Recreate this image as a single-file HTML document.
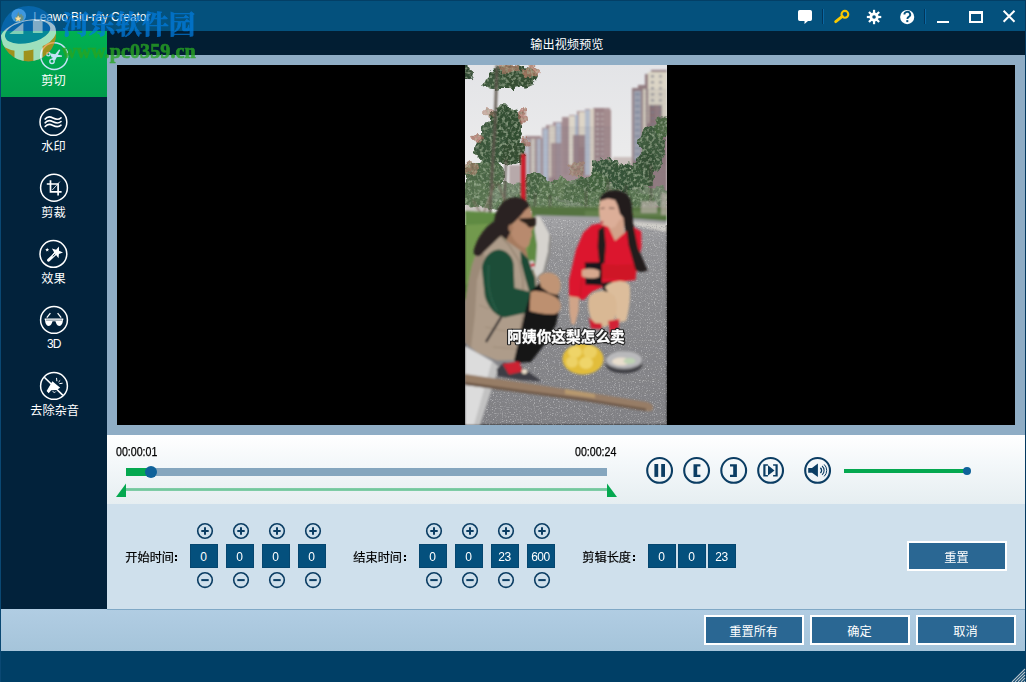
<!DOCTYPE html>
<html lang="zh-CN"><head><meta charset="utf-8"><title>Leawo Blu-ray Creator</title>
<style>
html,body{margin:0;padding:0}
body{width:1026px;height:682px;position:relative;overflow:hidden;background:#02213a;font-family:"Liberation Sans",sans-serif;font-size:12px;color:#fff}
.a{position:absolute}
.g{position:absolute;overflow:visible}
.h{position:absolute;color:transparent;white-space:nowrap;line-height:1.4;height:1.4em;overflow:hidden;font-family:"Liberation Sans",sans-serif}
.box{position:absolute;width:28px;height:24px;background:#04507d;color:#fff;font-size:12px;line-height:24px;text-align:center;top:544px;box-sizing:border-box;border:1px solid #05466f;text-indent:-1.2px;letter-spacing:-.5px}
.btn{position:absolute;width:100px;height:30px;box-sizing:border-box;border:2px solid #fff;background:#2a6793}
.t{position:absolute;white-space:nowrap}
.lbl{font-family:"Liberation Sans","Noto Sans CJK SC",sans-serif;font-size:12.2px}
</style></head><body>
<div class="a" style="left:0;top:0;width:1026px;height:31px;background:#04517d"></div><div class="a" style="left:0;top:0;width:1026px;height:1px;background:#033f66"></div><div class="a" style="left:0;top:31px;width:107px;height:578px;background:#02223b"></div><div class="a" style="left:0;top:31px;width:107px;height:66px;background:linear-gradient(#00b152,#009c4a)"></div><div class="a" style="left:107px;top:31px;width:919px;height:24px;background:#021e33"></div><div class="a" style="left:107px;top:55px;width:918px;height:380px;background:#8fadc5"></div><div class="a" style="left:117px;top:65px;width:898px;height:360px;background:#000"></div><div class="a" style="left:107px;top:435px;width:918px;height:69px;background:linear-gradient(#ffffff,#f4f8fa 40%,#e6eef1)"></div><div class="a" style="left:107px;top:504px;width:918px;height:105px;background:#cfe0ec"></div><div class="a" style="left:0;top:609px;width:1026px;height:42px;background:linear-gradient(#b1cde3,#a5c4da)"></div><div class="a" style="left:107px;top:609px;width:918px;height:1px;background:#7fa8c6"></div><div class="a" style="left:0;top:651px;width:1026px;height:31px;background:#003f66"></div><div class="a" style="left:0;top:0;width:1px;height:682px;background:#0a4873"></div><div class="a" style="left:1025px;top:0;width:1px;height:682px;background:#053a60"></div><div class="a" style="left:0;top:0;width:1px;height:31px;background:#033f66"></div><div class="t" id="ttl" style="left:33.3px;top:10px;font-size:12px;line-height:14px;color:#fff;letter-spacing:-.16px">Leawo Blu-ray Creator</div><svg class="g" style="left:529.7px;top:36.20px" width="74.0" height="17.8" viewBox="0 -12.70 74.0 17.8"><text class="lbl" x="0.3" y="0" fill="#fff">输出视频预览</text></svg><svg class="g" style="left:790px;top:0" width="236" height="31" viewBox="790 0 236 31">
<path d="M799.8 9.9h10.4a1.8 1.8 0 0 1 1.8 1.8v7.6a1.8 1.8 0 0 1-1.8 1.8h-2.2l-3.5 3v-3h-4.7a1.8 1.8 0 0 1-1.8-1.8v-7.6a1.8 1.8 0 0 1 1.8-1.8z" fill="#fff"/>
<rect x="822" y="9" width="1" height="15" fill="#03365a"/><rect x="823" y="9" width="1" height="15" fill="#0a68a4"/>
<circle cx="844.9" cy="14.3" r="3.4" fill="none" stroke="#f8c800" stroke-width="2.1"/>
<path d="M842.3 16.4 L835.7 21.7" stroke="#f8c800" stroke-width="2.9" stroke-linecap="round" fill="none"/>

<g transform="translate(874.05 17)" fill="#fff">
<circle r="4.6"/>
<rect x="-1.1" y="-7.2" width="2.2" height="14.4"/><rect x="-7.2" y="-1.1" width="14.4" height="2.2"/>
<g transform="rotate(45)"><rect x="-1.1" y="-7.2" width="2.2" height="14.4"/><rect x="-7.2" y="-1.1" width="14.4" height="2.2"/></g>
<circle r="1.8" fill="#04517d"/>
</g>
<circle cx="907.2" cy="17.1" r="7.05" fill="#fff"/>
<path d="M904.4 14.6 a2.9 2.7 0 1 1 4.3 2.3 c-1.1 .7 -1.3 1.1 -1.3 2.2" fill="none" stroke="#04517d" stroke-width="1.9"/>
<rect x="906.3" y="20.1" width="2" height="2" fill="#04517d"/>
<rect x="924" y="9" width="1" height="15" fill="#03365a"/><rect x="925" y="9" width="1" height="15" fill="#0a68a4"/>
<rect x="937" y="21" width="12" height="2" fill="#fff"/>
<path d="M969 11h14v12h-14z M971 14v7h10v-7z" fill="#fff" fill-rule="evenodd"/>
<path d="M1003.6 10.8 L1014.5 21.7 M1014.5 10.8 L1003.6 21.7" stroke="#fff" stroke-width="2" fill="none"/>
</svg><svg class="g" style="left:0;top:31px" width="107" height="400" viewBox="0 31 107 400"><circle cx="54.2" cy="56.1" r="13.4" fill="none" stroke="#c4e2f7" stroke-width="1.5"/><g fill="none" stroke="#c4e2f7" stroke-width="1.4">
<circle cx="48.4" cy="54.2" r="1.7"/><circle cx="52" cy="61.3" r="2.2"/></g>
<path d="M50 53.2 L62 55.5 L62 56.7 L51.6 57.6 Z" fill="#c4e2f7"/>
<path d="M51.8 58.6 L59.1 49.4 L60.3 50 L55.1 60.6 Z" fill="#c4e2f7"/><circle cx="53.4" cy="121.95" r="13.4" fill="none" stroke="#fff" stroke-width="1.5"/><path d="M45.2 119.1 C47.6 115.8 50 116.4 53 118.0 S58.4 120.2 61 117.8" fill="none" stroke="#fff" stroke-width="1.65" stroke-linecap="round"/><path d="M45.2 122.8 C47.6 119.5 50 120.1 53 121.7 S58.4 123.9 61 121.5" fill="none" stroke="#fff" stroke-width="1.65" stroke-linecap="round"/><path d="M45.2 126.5 C47.6 123.2 50 123.8 53 125.4 S58.4 127.6 61 125.2" fill="none" stroke="#fff" stroke-width="1.65" stroke-linecap="round"/><circle cx="54" cy="187.75" r="13.4" fill="none" stroke="#fff" stroke-width="1.5"/><g fill="none" stroke="#fff" stroke-width="1.7">
<path d="M50.5 180.3V191.8H61.6"/><path d="M46.8 184H58.1V195.5"/></g>
<path d="M52.2 190.1L59.9 181.6" stroke="#fff" stroke-width=".8"/><circle cx="53.4" cy="253.9" r="13.4" fill="none" stroke="#fff" stroke-width="1.5"/><path d="M58.92 246.47L59.04 250.79L63.00 252.52L58.93 253.96L58.51 258.26L55.88 254.84L51.66 255.77L54.10 252.21L51.91 248.48L56.06 249.70Z" fill="#fff"/><path d="M47.20 247.70L47.73 249.07L49.20 249.15L48.06 250.08L48.43 251.50L47.20 250.70L45.97 251.50L46.34 250.08L45.20 249.15L46.67 249.07Z" fill="#fff"/><path d="M55.2 254 L48.6 260.2" stroke="#fff" stroke-width="3" stroke-linecap="round"/><path d="M54.9 254.3 L53 256.1" stroke="#02223b" stroke-width=".9" stroke-linecap="round"/><circle cx="54" cy="319.95" r="13.4" fill="none" stroke="#fff" stroke-width="1.5"/><path d="M44.7 318.6H63.3V320H62.9C62.9 323 61.6 325.9 59.3 325.9C57 325.9 56.3 323.5 55.4 321.2H52.6C51.7 323.5 51 325.9 48.7 325.9C46.4 325.9 45.1 323 45.1 320H44.7Z" fill="#fff"/>
<path d="M46 320.15H62" stroke="#02223b" stroke-width=".55"/>
<path d="M46.8 317.6L50.4 313.2M61.2 317.6L57.6 313.2" stroke="#fff" stroke-width="1.3" fill="none"/><circle cx="54" cy="385.95" r="13.4" fill="none" stroke="#fff" stroke-width="1.5"/><path d="M44.3 377.3L63 395.4" stroke="#fff" stroke-width="1.6"/>
<path d="M46.6 391 L52.4 381.2 L60.2 387.7 L56.4 389.9 L51.2 390.2 L48.7 393.2 Z" fill="#fff"/>
<path d="M56.5 377.9L56.9 381.2M60.2 380.4L58.5 382M62.6 383.2L59.3 383.7" stroke="#fff" stroke-width="1" fill="none"/>
<path d="M52.8 391.2a1.6 1.6 0 0 0 3 .3" stroke="#fff" stroke-width=".9" fill="none"/></svg><svg class="g" style="left:41.300000000000004px;top:72.20px" width="26.0" height="17.8" viewBox="0 -12.70 26.0 17.8"><text class="lbl" x="0.3" y="0" fill="#fff">剪切</text></svg><svg class="g" style="left:41.300000000000004px;top:138.20px" width="26.0" height="17.8" viewBox="0 -12.70 26.0 17.8"><text class="lbl" x="0.3" y="0" fill="#fff">水印</text></svg><svg class="g" style="left:41.300000000000004px;top:204.20px" width="26.0" height="17.8" viewBox="0 -12.70 26.0 17.8"><text class="lbl" x="0.3" y="0" fill="#fff">剪裁</text></svg><svg class="g" style="left:41.300000000000004px;top:270.20px" width="26.0" height="17.8" viewBox="0 -12.70 26.0 17.8"><text class="lbl" x="0.3" y="0" fill="#fff">效果</text></svg><svg class="g" style="left:29.5px;top:402.20px" width="50.0" height="17.8" viewBox="0 -12.70 50.0 17.8"><text class="lbl" x="0.3" y="0" fill="#fff">去除杂音</text></svg><div class="t" style="left:47px;top:336.5px;font-size:12px;line-height:14px;color:#fff;letter-spacing:-.9px">3D</div><svg class="g" style="left:465px;top:65px;overflow:hidden" width="202" height="360" viewBox="0 0 202 360"><defs>
<linearGradient id="sky" x1="0" y1="0" x2="0" y2="1"><stop offset="0" stop-color="#e3e4e7"/><stop offset="1" stop-color="#f1f0ef"/></linearGradient>
<linearGradient id="road" x1="0" y1="0" x2="0" y2="1"><stop offset="0" stop-color="#a5a5a8"/><stop offset=".16" stop-color="#939396"/><stop offset=".45" stop-color="#8a8a8d"/><stop offset="1" stop-color="#808084"/></linearGradient>
<filter id="bl" x="-5%" y="-5%" width="110%" height="110%"><feGaussianBlur stdDeviation="0.8"/></filter>
<filter id="bl2" x="-5%" y="-5%" width="110%" height="110%"><feGaussianBlur stdDeviation="1.6"/></filter>
<filter id="nz" x="0" y="0" width="100%" height="100%"><feTurbulence type="fractalNoise" baseFrequency="0.9" numOctaves="2" seed="3"/><feColorMatrix values="0 0 0 0 0.5  0 0 0 0 0.5  0 0 0 0 0.5  1.6 0 0 0 -0.55"/></filter>
<filter id="nz2" x="0" y="0" width="100%" height="100%"><feTurbulence type="fractalNoise" baseFrequency="0.25" numOctaves="3" seed="8"/><feColorMatrix values="0 0 0 0 0.12  0 0 0 0 0.2  0 0 0 0 0.1  2.2 0 0 0 -0.9"/></filter>
<filter id="lf" x="-10%" y="-10%" width="120%" height="120%"><feTurbulence type="fractalNoise" baseFrequency="0.11" numOctaves="3" seed="5" result="t"/><feDisplacementMap in="SourceGraphic" in2="t" scale="11" xChannelSelector="R" yChannelSelector="G" result="d"/><feTurbulence type="fractalNoise" baseFrequency="0.32" numOctaves="2" seed="9" result="n"/><feColorMatrix in="n" type="matrix" values="0 0 0 0 .05  0 0 0 0 .1  0 0 0 0 .05  0 1.3 0 0 -0.52" result="sh"/><feComposite in="sh" in2="d" operator="in" result="shc"/><feColorMatrix in="n" type="matrix" values="0 0 0 0 .52  0 0 0 0 .66  0 0 0 0 .45  1.3 0 0 0 -0.62" result="hl"/><feComposite in="hl" in2="d" operator="in" result="hlc"/><feMerge><feMergeNode in="d"/><feMergeNode in="shc"/><feMergeNode in="hlc"/></feMerge><feGaussianBlur stdDeviation="0.6"/></filter>
<filter id="nzw" x="0" y="0" width="100%" height="100%"><feTurbulence type="fractalNoise" baseFrequency="0.85" numOctaves="2" seed="11"/><feColorMatrix values="0 0 0 0 0.86  0 0 0 0 0.86  0 0 0 0 0.86  3.2 0 0 0 -1.75"/><feComposite operator="in" in2="SourceGraphic"/></filter>
<filter id="nzd" x="0" y="0" width="100%" height="100%"><feTurbulence type="fractalNoise" baseFrequency="0.8" numOctaves="2" seed="23"/><feColorMatrix values="0 0 0 0 0.22  0 0 0 0 0.22  0 0 0 0 0.24  3.2 0 0 0 -1.75"/><feComposite operator="in" in2="SourceGraphic"/></filter>
<filter id="nzl" x="0" y="0" width="100%" height="100%"><feTurbulence type="fractalNoise" baseFrequency="0.35" numOctaves="3" seed="4"/><feColorMatrix values="0 0 0 0 0.93  0 0 0 0 0.93  0 0 0 0 0.92  2.6 0 0 0 -1.35"/></filter>
<pattern id="win" width="3.2" height="3.4" patternUnits="userSpaceOnUse"><rect x=".6" y=".8" width="1.6" height="1.5" fill="#5d6070" opacity=".38"/></pattern><clipPath id="pc"><rect width="202" height="360"/></clipPath>
</defs><g clip-path="url(#pc)"><rect width="202" height="160" fill="url(#sky)"/><g filter="url(#bl)"><path d="M167 23H173V20H180V9H186V5H202V150H167Z" fill="#937d81"/><path d="M183 7H202V52H197V40H190V58H183Z" fill="#dcd5c6"/><path d="M169 26H176V95H169Z" fill="#a9b3c2" opacity=".8"/><path d="M178 24H181V95H178Z" fill="#d5cdbf"/><path d="M184 40H190V96H184Z" fill="#8c7276"/><path d="M192 52H202V100H192Z" fill="#8f777b"/><rect x="186" y="10" width="3" height="2.5" fill="#7d7f8c" opacity=".7"/><rect x="194" y="10" width="3" height="2.5" fill="#7d7f8c" opacity=".6"/><rect x="170" y="28" width="5" height="2.5" fill="#78849a" opacity=".6"/><rect x="186" y="16" width="3" height="2.5" fill="#7d7f8c" opacity=".7"/><rect x="194" y="16" width="3" height="2.5" fill="#7d7f8c" opacity=".6"/><rect x="170" y="34" width="5" height="2.5" fill="#78849a" opacity=".6"/><rect x="186" y="22" width="3" height="2.5" fill="#7d7f8c" opacity=".7"/><rect x="194" y="22" width="3" height="2.5" fill="#7d7f8c" opacity=".6"/><rect x="170" y="40" width="5" height="2.5" fill="#78849a" opacity=".6"/><rect x="186" y="28" width="3" height="2.5" fill="#7d7f8c" opacity=".7"/><rect x="194" y="28" width="3" height="2.5" fill="#7d7f8c" opacity=".6"/><rect x="170" y="46" width="5" height="2.5" fill="#78849a" opacity=".6"/><rect x="186" y="34" width="3" height="2.5" fill="#7d7f8c" opacity=".7"/><rect x="194" y="34" width="3" height="2.5" fill="#7d7f8c" opacity=".6"/><rect x="170" y="52" width="5" height="2.5" fill="#78849a" opacity=".6"/><rect x="186" y="40" width="3" height="2.5" fill="#7d7f8c" opacity=".7"/><rect x="194" y="40" width="3" height="2.5" fill="#7d7f8c" opacity=".6"/><rect x="170" y="58" width="5" height="2.5" fill="#78849a" opacity=".6"/><rect x="186" y="46" width="3" height="2.5" fill="#7d7f8c" opacity=".7"/><rect x="194" y="46" width="3" height="2.5" fill="#7d7f8c" opacity=".6"/><rect x="170" y="64" width="5" height="2.5" fill="#78849a" opacity=".6"/><rect x="186" y="52" width="3" height="2.5" fill="#7d7f8c" opacity=".7"/><rect x="194" y="52" width="3" height="2.5" fill="#7d7f8c" opacity=".6"/><rect x="170" y="70" width="5" height="2.5" fill="#78849a" opacity=".6"/><rect x="186" y="58" width="3" height="2.5" fill="#7d7f8c" opacity=".7"/><rect x="194" y="58" width="3" height="2.5" fill="#7d7f8c" opacity=".6"/><rect x="170" y="76" width="5" height="2.5" fill="#78849a" opacity=".6"/><rect x="186" y="64" width="3" height="2.5" fill="#7d7f8c" opacity=".7"/><rect x="194" y="64" width="3" height="2.5" fill="#7d7f8c" opacity=".6"/><rect x="170" y="82" width="5" height="2.5" fill="#78849a" opacity=".6"/><rect x="186" y="70" width="3" height="2.5" fill="#7d7f8c" opacity=".7"/><rect x="194" y="70" width="3" height="2.5" fill="#7d7f8c" opacity=".6"/><rect x="170" y="88" width="5" height="2.5" fill="#78849a" opacity=".6"/><rect x="186" y="76" width="3" height="2.5" fill="#7d7f8c" opacity=".7"/><rect x="194" y="76" width="3" height="2.5" fill="#7d7f8c" opacity=".6"/><rect x="170" y="94" width="5" height="2.5" fill="#78849a" opacity=".6"/><rect x="186" y="82" width="3" height="2.5" fill="#7d7f8c" opacity=".7"/><rect x="194" y="82" width="3" height="2.5" fill="#7d7f8c" opacity=".6"/><rect x="170" y="100" width="5" height="2.5" fill="#78849a" opacity=".6"/><rect x="186" y="88" width="3" height="2.5" fill="#7d7f8c" opacity=".7"/><rect x="194" y="88" width="3" height="2.5" fill="#7d7f8c" opacity=".6"/><rect x="170" y="106" width="5" height="2.5" fill="#78849a" opacity=".6"/><rect x="186" y="94" width="3" height="2.5" fill="#7d7f8c" opacity=".7"/><rect x="194" y="94" width="3" height="2.5" fill="#7d7f8c" opacity=".6"/><rect x="170" y="112" width="5" height="2.5" fill="#78849a" opacity=".6"/><path d="M77 63H81V60H88V57H97V52H104V50H112V46H120V44H128V43H145V46H146V140H77Z" fill="#a89296"/><path d="M129 43H139V140H129Z" fill="#9c8387"/><path d="M139 45H146V140H139Z" fill="#a48c8e"/><path d="M78 64H83V125H78Z" fill="#b4bfd0"/><path d="M84 61H90V112H84Z" fill="#dbd3c6"/><path d="M91 58H96V120H91Z" fill="#b2bccd"/><path d="M98 54H103V110H98Z" fill="#a28b8f"/><path d="M104 51H110V100H104Z" fill="#ddd6c9"/><path d="M110 50H113V105H110Z" fill="#aab5c8"/><path d="M114 47H120V82H114Z" fill="#ddd5c7"/><path d="M120 45H125V110H120Z" fill="#b3bccb"/><path d="M125 44H129V110H125Z" fill="#d9d0c3"/><path d="M108 70H120V110H108Z" fill="#94797f" opacity=".85"/><path d="M86 78H96V120H86Z" fill="#9a8186" opacity=".8"/><rect x="131" y="48" width="3" height="2" fill="#c8c0bc" opacity=".7"/><rect x="136" y="48" width="2.5" height="2" fill="#c8c0bc" opacity=".6"/><rect x="131" y="53" width="3" height="2" fill="#c8c0bc" opacity=".7"/><rect x="136" y="53" width="2.5" height="2" fill="#c8c0bc" opacity=".6"/><rect x="131" y="58" width="3" height="2" fill="#c8c0bc" opacity=".7"/><rect x="136" y="58" width="2.5" height="2" fill="#c8c0bc" opacity=".6"/><rect x="131" y="63" width="3" height="2" fill="#c8c0bc" opacity=".7"/><rect x="136" y="63" width="2.5" height="2" fill="#c8c0bc" opacity=".6"/><rect x="131" y="68" width="3" height="2" fill="#c8c0bc" opacity=".7"/><rect x="136" y="68" width="2.5" height="2" fill="#c8c0bc" opacity=".6"/><rect x="131" y="73" width="3" height="2" fill="#c8c0bc" opacity=".7"/><rect x="136" y="73" width="2.5" height="2" fill="#c8c0bc" opacity=".6"/><rect x="131" y="78" width="3" height="2" fill="#c8c0bc" opacity=".7"/><rect x="136" y="78" width="2.5" height="2" fill="#c8c0bc" opacity=".6"/><rect x="131" y="83" width="3" height="2" fill="#c8c0bc" opacity=".7"/><rect x="136" y="83" width="2.5" height="2" fill="#c8c0bc" opacity=".6"/><rect x="131" y="88" width="3" height="2" fill="#c8c0bc" opacity=".7"/><rect x="136" y="88" width="2.5" height="2" fill="#c8c0bc" opacity=".6"/><rect x="131" y="93" width="3" height="2" fill="#c8c0bc" opacity=".7"/><rect x="136" y="93" width="2.5" height="2" fill="#c8c0bc" opacity=".6"/><rect x="131" y="98" width="3" height="2" fill="#c8c0bc" opacity=".7"/><rect x="136" y="98" width="2.5" height="2" fill="#c8c0bc" opacity=".6"/><rect x="131" y="103" width="3" height="2" fill="#c8c0bc" opacity=".7"/><rect x="136" y="103" width="2.5" height="2" fill="#c8c0bc" opacity=".6"/><rect x="131" y="108" width="3" height="2" fill="#c8c0bc" opacity=".7"/><rect x="136" y="108" width="2.5" height="2" fill="#c8c0bc" opacity=".6"/><rect x="131" y="113" width="3" height="2" fill="#c8c0bc" opacity=".7"/><rect x="136" y="113" width="2.5" height="2" fill="#c8c0bc" opacity=".6"/><rect x="131" y="118" width="3" height="2" fill="#c8c0bc" opacity=".7"/><rect x="136" y="118" width="2.5" height="2" fill="#c8c0bc" opacity=".6"/><path d="M57 73H60V71H76V73H78V140H57Z" fill="#a08a8e"/><path d="M60 75H64V135H60Z" fill="#c3c6d0"/><path d="M66 74H70V135H66Z" fill="#cfc8c0"/><path d="M72 74H76V135H72Z" fill="#b3b8c6"/><path d="M44 100H57V140H44Z" fill="#b7a9aa"/><path d="M0 118H25V150H0Z" fill="#c9c4c0"/><path d="M148 92H167V140H148Z" fill="#c2b4b2" opacity=".8"/><path d="M78 62H146V140H78Z M58 74H77V140H58Z M168 24H202V140H168Z" fill="url(#win)"/></g><g filter="url(#lf)"><ellipse cx="100" cy="132" rx="110" ry="16" fill="#6f8468" opacity="0.9"/><ellipse cx="20" cy="110" rx="20" ry="15" fill="#4f6a49" opacity="1"/><ellipse cx="10" cy="128" rx="14" ry="14" fill="#5c7653" opacity="1"/><ellipse cx="6" cy="103" rx="7" ry="7" fill="#a8806c" opacity="0.75"/><ellipse cx="70" cy="120" rx="11" ry="13" fill="#4a6545" opacity="1"/><ellipse cx="84" cy="125" rx="11" ry="11" fill="#587350" opacity="1"/><ellipse cx="97" cy="123" rx="8" ry="10" fill="#637d58" opacity="1"/><ellipse cx="112" cy="104" rx="9" ry="9" fill="#a88570" opacity="0.6"/><ellipse cx="120" cy="122" rx="11" ry="11" fill="#466242" opacity="1"/><ellipse cx="108" cy="128" rx="10" ry="9" fill="#55704e" opacity="1"/><ellipse cx="140" cy="105" rx="14" ry="13" fill="#37553a" opacity="1"/><ellipse cx="133" cy="118" rx="10" ry="10" fill="#45633f" opacity="1"/><ellipse cx="160" cy="113" rx="13" ry="15" fill="#355237" opacity="1"/><ellipse cx="176" cy="110" rx="13" ry="13" fill="#3a583a" opacity="1"/><ellipse cx="187" cy="82" rx="13" ry="24" fill="#3a573a" opacity="0.95"/><ellipse cx="196" cy="62" rx="7" ry="11" fill="#47653f" opacity="0.9"/><ellipse cx="181" cy="100" rx="9" ry="13" fill="#345035" opacity="1"/><ellipse cx="150" cy="134" rx="40" ry="9" fill="#5a7652" opacity="0.9"/><ellipse cx="60" cy="140" rx="40" ry="8" fill="#66805c" opacity="0.85"/><ellipse cx="48" cy="12" rx="25" ry="12" fill="#344e33" opacity="1"/><ellipse cx="30" cy="18" rx="11" ry="7" fill="#3c583d" opacity="1"/><ellipse cx="66" cy="6" rx="9" ry="6" fill="#b87e6a" opacity="0.8"/><ellipse cx="44" cy="3" rx="11" ry="4.5" fill="#b88470" opacity="0.75"/><ellipse cx="40" cy="62" rx="18" ry="22" fill="#334d33" opacity="1"/><ellipse cx="28" cy="84" rx="18" ry="14" fill="#3a563b" opacity="1"/><ellipse cx="48" cy="88" rx="12" ry="12" fill="#344e33" opacity="1"/><ellipse cx="22" cy="66" rx="7" ry="9" fill="#405c43" opacity="1"/><ellipse cx="58" cy="52" rx="5" ry="7" fill="#b07064" opacity="0.75"/><ellipse cx="13" cy="74" rx="6" ry="6" fill="#b07064" opacity="0.75"/><ellipse cx="60" cy="78" rx="5" ry="5" fill="#b07064" opacity="0.65"/><ellipse cx="24" cy="48" rx="5" ry="5" fill="#b48070" opacity="0.55"/><ellipse cx="2" cy="6" rx="6" ry="11" fill="#324a35" opacity="1"/></g><g filter="url(#bl)"><path d="M32 0L30 60L27 110L25 150" stroke="#5d544c" stroke-width="2.6" fill="none"/><path d="M41 95L39 150" stroke="#5a5048" stroke-width="2" fill="none"/><path d="M33 118L45 150M30 118L18 150M8 135L22 160" stroke="#7a6a5c" stroke-width="1.3" fill="none"/><path d="M143 115V148M161 120V148M186 100V150M121 125V148M85 130V148M70 128V148" stroke="#4a463e" stroke-width="1.2" fill="none" opacity=".8"/><rect x="56" y="89" width="4.6" height="66" fill="#cf1f2c"/></g><g filter="url(#bl)"><rect x="0" y="148" width="202" height="212" fill="url(#road)"/><path d="M66 142H202V156L150 152L100 151L66 150Z" fill="#54733f"/><path d="M120 146H202V151H120Z" fill="#6b8654" opacity=".7"/><path d="M146 155L202 159V167L168 160Z" fill="#cfcdc8"/><path d="M196 128H202V150H196Z M176 136H192V148H176Z" fill="#b9b0aa" opacity=".7"/><path d="M0 146L70 150L82 168L80 186L62 216L0 236Z" fill="#5f8a42"/><path d="M0 160L40 158L66 170L60 200L0 220Z" fill="#7aa052" opacity=".7"/><path d="M69 152L75 151.5L84.5 169.5L83 187L78 207L70 214L66 213L71 196L72 180L69.5 164Z" fill="#d6d3ce"/><path d="M84.5 169.5L83 187L78 207L70 214L71 217L80 209L85.5 188L86.5 171Z" fill="#8d8b88"/></g><path d="M76 153L202 160V360H15L34 302L56 296L70 217L80 209L85.5 188L86.5 171Z" filter="url(#nzw)" opacity=".5"/><path d="M76 153L202 160V360H15L34 302L56 296L70 217L80 209L85.5 188L86.5 171Z" filter="url(#nzd)" opacity=".6"/><g filter="url(#bl)"><path d="M0 281L27 296L33 302L13 360H0Z" fill="#dcdcdc"/><path d="M27 296L34 302L15 360H9Z" fill="#c2c2c2"/><path d="M47.5 132.4C56 131.2 63 135.5 64.8 141.5L60 146L56 151L50 157L45 161L45.5 168L42 175C36 172 31 166 29.5 160C28 149 35 135 47.5 132.4Z" fill="#2a2220"/><path d="M45.5 167L60.8 183L63 193L50 191L41 176Z" fill="#a57a5f"/><path d="M64.8 141.5C66.5 146 67 150 67.5 153L69 163L66.6 166L67.2 170L65.6 174L64.2 180L60.8 183.2C55 182 49 176 46.5 170L44.8 161L50 156.5L56 150.5L60 145.5Z" fill="#b88a6e"/><ellipse cx="45.6" cy="163" rx="2.2" ry="3.6" fill="#a87c62"/><path d="M54.5 153.6L70.8 152.4L70.8 159.6C68.5 163.6 63.2 163.6 61.4 159.2L54.6 155.4Z" fill="#2c231e"/><path d="M29.5 164.5L42 176L55.5 185.5L63.4 193.4L71.5 212L73.5 226L66 240L61 262L57.5 280L54 295L32 295.5L12 287.5L0 277.5L0 238L3 219L7 200L13 183Z" fill="#ae9c8a"/><path d="M13 183L7 200L3 219L0 238V277L6 283L10 250L12 215L20 190Z" fill="#9c8a78"/><path d="M30 166L44 180L54 196L58 215L58 245L55 270" stroke="#93816f" stroke-width="1.3" fill="none"/><path d="M20 262L50 268M14 240L24 244M28 282L52 284" stroke="#9a8876" stroke-width="1" fill="none" opacity=".8"/><path d="M30 156C21 160 11 174 8.5 187C9 191 13 192.5 16 190C22 184 31 175 39 168Z" fill="#2b2321"/><path d="M55.5 186L63 193.5L70 213L71 228L66 232L60.5 214L56 197Z" fill="#1c4936"/><path d="M64.5 196L68.5 195L71 203L67 205Z" fill="#d8d0d0"/><path d="M65.5 199L69 198L70 201L66.6 202Z" fill="#c8283a"/><path d="M33.7 184.4C42 185 48 192 48.5 199L49.5 223L65.5 227L64 247L40 252.5C30 252 22 240 19.8 231L16.8 203C18 192 26 185 33.7 184.4Z" fill="#1e4d39"/><path d="M24 200C22 215 24 232 32 246" stroke="#2a6048" stroke-width="2" fill="none" opacity=".7"/><path d="M36.5 251.5L21 277" stroke="#222226" stroke-width="2.2" fill="none"/><path d="M66 226L78 215L92 223L95 240L91 260L80 279L66 297L54 298L49 295.5L55 270L59.4 249Z" fill="#141417"/><path d="M73.5 212C78 206 88 206 93 212C97 218 96 226 92 230L84 228L76 222Z" fill="#c09474"/><path d="M65.5 227C72 224 86 228 93 234C98 240 96 247 90 249C82 250 72 248 64.5 246Z" fill="#bd9070"/><path d="M31.7 304L39 297.5L58 303L77 316.5L56 315L32.5 311Z" fill="#3c3c44"/><path d="M37.8 299L54 296.5L57.6 306.5L44 309.5Z" fill="#cc2232"/><ellipse cx="59.4" cy="306.5" rx="2.8" ry="2.4" fill="#e8dcc8"/><path d="M134.7 134.8C137 127 146 124.5 152 125.6C160 126 166 131 166.5 140L168 158L173 183L182.5 205.5L176 207L170.5 205L163.5 180L158 155L150 150Z" fill="#231c1c"/><path d="M143.3 158L158.5 152L159.5 172L150 176.5L144 170Z" fill="#d2a28a"/><path d="M135 136C140 131 150 132 154 138L158 150C158 153 156 155 154.5 155L150 162L141.5 164.2L137.5 161.5L136 157.5L134.2 150L133.8 143Z" fill="#dcae98"/><path d="M135 156.6L138.5 156.2L138 158.4L135.6 158.6Z" fill="#c0283a"/><path d="M135.5 143.6L139.5 143M144 143L149.5 143.4" stroke="#4a3430" stroke-width=".9" fill="none"/><path d="M134.5 136C136 128 147 124.5 153 126C161 127 166.5 132 166.5 142L160 154L155 149L152.5 140L150 135L143 133.5Z" fill="#231c1c"/><path d="M134 158.6L143.5 162L150 176L159.5 168L167 161.2L176.3 166.5L176.5 182L172.3 199.2L170.3 215L162.4 216L142.6 219.5L126.7 227L118.8 235L104 231.5L104 215L110.9 185.3L118.2 167.8L126.7 160Z" fill="#dc182e"/><path d="M127 200L134 199L152 200L170 199L170.3 215L150 214L134 213Z" fill="#cf1328"/><path d="M126.7 199.2L116.8 215L114.9 232" stroke="#b81024" stroke-width="1" fill="none" opacity=".7"/><path d="M133.4 165L139 161L140.8 180L139.5 198L134.5 200L132.6 182Z" fill="#231c1c"/><path d="M160 152L166.5 142L168 158L173 183L182.5 205.5L176 207L170.5 205L163.5 180Z" fill="#231c1c"/><path d="M119.8 197.5L136.6 197.2L137 220.5L120.5 219.5Z" fill="#15151a"/><path d="M117 205C122 202.5 131 203 134.7 206L134 212C128 214 120 213.5 117 211Z" fill="#d6a88e"/><path d="M136.6 218L146.5 216.5L148 229L140 232Z" fill="#17171b"/><path d="M140 222C147 215 160 214 164.4 220C166 228 164.5 246 161 256L151 258L150.5 240Z" fill="#dcbd9b"/><path d="M124 232C130 224 144 224 150 232C153.5 240 152 252 147 258L140 262L130 260C123.5 252 122 240 124 232Z" fill="#d9b894"/><path d="M104 231L114 232.5L113.5 246L110 259.5L106.5 259L104.5 248Z" fill="#d0a488"/><path d="M123.8 252L130 258L136.6 258.5L137 264L126 263.5Z" fill="#d01e30"/><path d="M143 256L154.5 254L152.5 270L147 276Z" fill="#d42034"/><ellipse cx="118" cy="294" rx="20.5" ry="15.5" fill="#e2bd3a"/><ellipse cx="110" cy="287" rx="7" ry="6" fill="#efd468"/><ellipse cx="125" cy="287" rx="7" ry="6.5" fill="#ecd062"/><ellipse cx="107" cy="297" rx="6" ry="5.5" fill="#edd266"/><ellipse cx="121" cy="298" rx="7" ry="6" fill="#efd56a"/><ellipse cx="159" cy="299" rx="18.5" ry="9.5" fill="#3e3e42"/><ellipse cx="159" cy="294.5" rx="19.5" ry="10" fill="#8a8a8d"/><ellipse cx="159" cy="294.5" rx="17.6" ry="8.4" fill="#b9b9bb"/><path d="M142 293a17.6 8.4 0 0 1 34 -1.5a17 6 0 0 0 -34 1.5Z" fill="#5e5e62"/><ellipse cx="156" cy="296.5" rx="9" ry="4" fill="#e8decd"/><ellipse cx="164.5" cy="296" rx="6" ry="3" fill="#bdd2b2"/><path d="M0 309L60 318L120 327L182 337Q189 339 188 344Q187 347 181 346L120 336L60 328L0 320Z" fill="#977d66"/><path d="M0 317L60 325.5L120 333.5L181 343.5L181 346L120 336L60 328L0 320Z" fill="#6c5747"/><path d="M100 324L130 329L130 333L100 329Z" fill="#c0a070" opacity=".8"/></g></g><g transform="translate(42.0 276.7)" font-family="&quot;Liberation Sans&quot;,&quot;Noto Sans CJK SC&quot;,sans-serif" font-size="14.7" font-weight="bold"><text x="0.3" y="0" fill="#222" stroke="#222" stroke-width="2.6" stroke-linejoin="round">阿姨你这梨怎么卖</text><text x="0.3" y="0" fill="#fff" stroke="#fff" stroke-width=".3" stroke-linejoin="round">阿姨你这梨怎么卖</text></g></svg><div class="t" style="left:116px;top:445px;font-size:12px;line-height:14px;color:#000;-webkit-text-stroke:.25px #000;transform:scaleX(.885);transform-origin:0 0">00:00:01</div><div class="t" style="left:575px;top:445px;font-size:12px;line-height:14px;color:#000;-webkit-text-stroke:.25px #000;transform:scaleX(.885);transform-origin:0 0">00:00:24</div><svg class="g" style="left:107px;top:435px" width="918" height="174" viewBox="107 435 918 174"><rect x="126" y="468" width="481" height="8" fill="#85a6be"/><rect x="126" y="468" width="25" height="8" fill="#05a850"/><circle cx="151" cy="472.1" r="6" fill="#0f629a"/><rect x="126" y="488.1" width="481" height="2.8" fill="#74c89e"/><path d="M126 483.4V497H116Z" fill="#05a850"/><path d="M607 483.4V497H617Z" fill="#05a850"/><circle cx="659.6" cy="470.4" r="12.4" fill="none" stroke="#0b3d63" stroke-width="2.1"/><circle cx="696.6" cy="470.4" r="12.4" fill="none" stroke="#0b3d63" stroke-width="2.1"/><circle cx="733.7" cy="470.4" r="12.4" fill="none" stroke="#0b3d63" stroke-width="2.1"/><circle cx="770.6" cy="470.4" r="12.4" fill="none" stroke="#0b3d63" stroke-width="2.1"/><circle cx="817.6" cy="470.4" r="12.4" fill="none" stroke="#0b3d63" stroke-width="2.1"/><rect x="654.4" y="464" width="3.8" height="12.9" fill="#0b3d63"/><rect x="661.2" y="464" width="3.8" height="12.9" fill="#0b3d63"/><path d="M693.5 464.3h6.9v2.1h-3.2v8.4h3.2v2.1h-6.9z" fill="#0b3d63"/><path d="M736.9 464.3h-6.9v2.1h3.2v8.4h-3.2v2.1h6.9z" fill="#0b3d63"/><path d="M763.3 464.2h4.6v1.6h-2.4v9.2h2.4v1.6h-4.6z M777.7 464.2h-4.6v1.6h2.4v9.2h-2.4v1.6h4.6z M768 465.3L774.5 470.4L768 475.5Z" fill="#0b3d63"/><path d="M808.2 468h3.8l5.9-4.4v13.5l-5.9-4.4h-3.8z" fill="#0b3d63"/><path d="M820.37 467.88A3.2 3.2 0 0 1 820.37 472.92" stroke="#0b3d63" stroke-width="1.3" fill="none"/><path d="M822.06 466.03A5.7 5.7 0 0 1 822.06 474.77" stroke="#0b3d63" stroke-width="1.1" fill="none"/><path d="M824.17 464.43A8.3 8.3 0 0 1 824.17 476.37" stroke="#0b3d63" stroke-width="1" fill="none"/><rect x="844" y="469" width="123" height="4" fill="#05a850"/><circle cx="967" cy="471" r="4" fill="#0f629a"/><circle cx="205" cy="531" r="7.3" fill="none" stroke="#0b3d63" stroke-width="1.6"/><path d="M201.3 531h7.4M205 527.3v7.4" stroke="#0b3d63" stroke-width="2" fill="none"/><circle cx="205" cy="580.1" r="7.3" fill="none" stroke="#0b3d63" stroke-width="1.6"/><path d="M201.3 580.1h7.4" stroke="#0b3d63" stroke-width="2" fill="none"/><circle cx="241" cy="531" r="7.3" fill="none" stroke="#0b3d63" stroke-width="1.6"/><path d="M237.3 531h7.4M241 527.3v7.4" stroke="#0b3d63" stroke-width="2" fill="none"/><circle cx="241" cy="580.1" r="7.3" fill="none" stroke="#0b3d63" stroke-width="1.6"/><path d="M237.3 580.1h7.4" stroke="#0b3d63" stroke-width="2" fill="none"/><circle cx="277" cy="531" r="7.3" fill="none" stroke="#0b3d63" stroke-width="1.6"/><path d="M273.3 531h7.4M277 527.3v7.4" stroke="#0b3d63" stroke-width="2" fill="none"/><circle cx="277" cy="580.1" r="7.3" fill="none" stroke="#0b3d63" stroke-width="1.6"/><path d="M273.3 580.1h7.4" stroke="#0b3d63" stroke-width="2" fill="none"/><circle cx="313" cy="531" r="7.3" fill="none" stroke="#0b3d63" stroke-width="1.6"/><path d="M309.3 531h7.4M313 527.3v7.4" stroke="#0b3d63" stroke-width="2" fill="none"/><circle cx="313" cy="580.1" r="7.3" fill="none" stroke="#0b3d63" stroke-width="1.6"/><path d="M309.3 580.1h7.4" stroke="#0b3d63" stroke-width="2" fill="none"/><circle cx="434" cy="531" r="7.3" fill="none" stroke="#0b3d63" stroke-width="1.6"/><path d="M430.3 531h7.4M434 527.3v7.4" stroke="#0b3d63" stroke-width="2" fill="none"/><circle cx="434" cy="580.1" r="7.3" fill="none" stroke="#0b3d63" stroke-width="1.6"/><path d="M430.3 580.1h7.4" stroke="#0b3d63" stroke-width="2" fill="none"/><circle cx="470" cy="531" r="7.3" fill="none" stroke="#0b3d63" stroke-width="1.6"/><path d="M466.3 531h7.4M470 527.3v7.4" stroke="#0b3d63" stroke-width="2" fill="none"/><circle cx="470" cy="580.1" r="7.3" fill="none" stroke="#0b3d63" stroke-width="1.6"/><path d="M466.3 580.1h7.4" stroke="#0b3d63" stroke-width="2" fill="none"/><circle cx="506" cy="531" r="7.3" fill="none" stroke="#0b3d63" stroke-width="1.6"/><path d="M502.3 531h7.4M506 527.3v7.4" stroke="#0b3d63" stroke-width="2" fill="none"/><circle cx="506" cy="580.1" r="7.3" fill="none" stroke="#0b3d63" stroke-width="1.6"/><path d="M502.3 580.1h7.4" stroke="#0b3d63" stroke-width="2" fill="none"/><circle cx="542" cy="531" r="7.3" fill="none" stroke="#0b3d63" stroke-width="1.6"/><path d="M538.3 531h7.4M542 527.3v7.4" stroke="#0b3d63" stroke-width="2" fill="none"/><circle cx="542" cy="580.1" r="7.3" fill="none" stroke="#0b3d63" stroke-width="1.6"/><path d="M538.3 580.1h7.4" stroke="#0b3d63" stroke-width="2" fill="none"/></svg><div class="box" style="left:190px">0</div><div class="box" style="left:226px">0</div><div class="box" style="left:262px">0</div><div class="box" style="left:298px">0</div><div class="box" style="left:419px">0</div><div class="box" style="left:455px">0</div><div class="box" style="left:491px">23</div><div class="box" style="left:527px">600</div><div class="box" style="left:648px">0</div><div class="box" style="left:678px">0</div><div class="box" style="left:708px">23</div><svg class="g" style="left:124.5px;top:548.80px" width="50.0" height="17.8" viewBox="0 -12.70 50.0 17.8"><text class="lbl" x="0.3" y="0" fill="#000" stroke="#000" stroke-width="0.2">开始时间</text></svg><div class="a" style="left:175.0px;top:555.3px;width:2.1px;height:2px;background:#000"></div><div class="a" style="left:175.0px;top:559.4px;width:2.1px;height:2px;background:#000"></div><svg class="g" style="left:353.2px;top:548.80px" width="50.0" height="17.8" viewBox="0 -12.70 50.0 17.8"><text class="lbl" x="0.3" y="0" fill="#000" stroke="#000" stroke-width="0.2">结束时间</text></svg><div class="a" style="left:403.7px;top:555.3px;width:2.1px;height:2px;background:#000"></div><div class="a" style="left:403.7px;top:559.4px;width:2.1px;height:2px;background:#000"></div><svg class="g" style="left:582.0px;top:548.80px" width="50.0" height="17.8" viewBox="0 -12.70 50.0 17.8"><text class="lbl" x="0.3" y="0" fill="#000" stroke="#000" stroke-width="0.2">剪辑长度</text></svg><div class="a" style="left:632.5px;top:555.3px;width:2.1px;height:2px;background:#000"></div><div class="a" style="left:632.5px;top:559.4px;width:2.1px;height:2px;background:#000"></div><div class="btn" style="left:907px;top:541px"></div><svg class="g" style="left:943.8000000000001px;top:548.60px" width="26.0" height="17.8" viewBox="0 -12.70 26.0 17.8"><text class="lbl" x="0.3" y="0" fill="#fff">重置</text></svg><div class="btn" style="left:704px;top:615px"></div><svg class="g" style="left:728.8000000000001px;top:622.60px" width="50.0" height="17.8" viewBox="0 -12.70 50.0 17.8"><text class="lbl" x="0.3" y="0" fill="#fff">重置所有</text></svg><div class="btn" style="left:810px;top:615px"></div><svg class="g" style="left:846.8000000000001px;top:622.60px" width="26.0" height="17.8" viewBox="0 -12.70 26.0 17.8"><text class="lbl" x="0.3" y="0" fill="#fff">确定</text></svg><div class="btn" style="left:916px;top:615px"></div><svg class="g" style="left:952.8000000000001px;top:622.60px" width="26.0" height="17.8" viewBox="0 -12.70 26.0 17.8"><text class="lbl" x="0.3" y="0" fill="#fff">取消</text></svg><svg class="g" style="left:1010px;top:667px" width="16" height="15" viewBox="0 0 16 15"><g stroke="#b8c4cc" stroke-width="1.1">
<path d="M2 15L15 2M5 15L15 5M8 15L15 8M11 15L15 11M14 15L15 14"/></g></svg><svg class="g" style="left:0;top:0" width="210" height="70" viewBox="0 0 210 70"><defs><clipPath id="wc"><circle cx="28.5" cy="33.7" r="27.7"/></clipPath>
<clipPath id="wi"><ellipse cx="28" cy="32" rx="23" ry="11" transform="rotate(-12 28 34)"/></clipPath></defs>
<g opacity=".62"><g clip-path="url(#wc)">
<rect x="0" y="0" width="60" height="64" fill="#0a72c4"/>
<path d="M0 40 C8 52 34 54 57 30 L60 70 L0 70Z" fill="#ff8400"/>
<g transform="rotate(-12 28 34)">
<path d="M28 20 a28.5 15.2 0 1 0 .01 0Z M28 21 a23 11 0 1 1 -.01 0Z" fill="#fff" fill-rule="evenodd"/>
</g>
<path d="M14.5 46 H23.7 V64 H14.5Z M33.4 44 H42.6 V64 H33.4Z" fill="#fff"/>
<g clip-path="url(#wi)"><path d="M32.9 16 H42.6 V33 H32.9Z" fill="#fff" opacity=".8"/>
<path d="M9.4 34 L23.4 22.8 V34Z" fill="#fff" opacity=".8"/></g>
</g></g><g transform="translate(62.3 34.3)" opacity=".75"><text x="0" y="0" font-family="&quot;Liberation Serif&quot;,&quot;Noto Serif CJK SC&quot;,serif" font-size="26.6" font-weight="bold" fill="#027cde" stroke="#027cde" stroke-width=".7">河东软件园</text></g></svg><div class="t" style="left:62px;top:40.2px;font-family:'Liberation Serif',serif;font-weight:bold;font-size:20px;line-height:22px;color:#28a523;opacity:.8;letter-spacing:.12px;-webkit-text-stroke:.7px #28a523" id="wurl">www.pc0359.cn</div><svg class="g" style="left:10px;top:7px" width="18" height="18" viewBox="10 7 18 18">
<defs><radialGradient id="ai" cx="45%" cy="35%" r="70%"><stop offset="0" stop-color="#3a93dc"/><stop offset=".75" stop-color="#419ae0"/><stop offset="1" stop-color="#62b0ea"/></radialGradient></defs>
<ellipse cx="18.7" cy="15.6" rx="7.3" ry="6.8" fill="url(#ai)"/>
<path d="M18.4 11.8 L19.6 15 L21.6 13.8 L22 15.6 L23.6 15.8 L23.2 20 L20 21.6 L15.4 21 L14.6 18.6 L16.6 16.4 Z" fill="#6f8f78" opacity=".85"/>
<path d="M18.15 15.9 L18.95 17.7 L20.9 17.9 L19.45 19.2 L19.85 21.1 L18.15 20.1 L16.45 21.1 L16.85 19.2 L15.4 17.9 L17.35 17.7 Z" fill="#ffdf9a" stroke="#ffdf9a" stroke-width=".5" stroke-linejoin="round"/>
</svg></body></html>
